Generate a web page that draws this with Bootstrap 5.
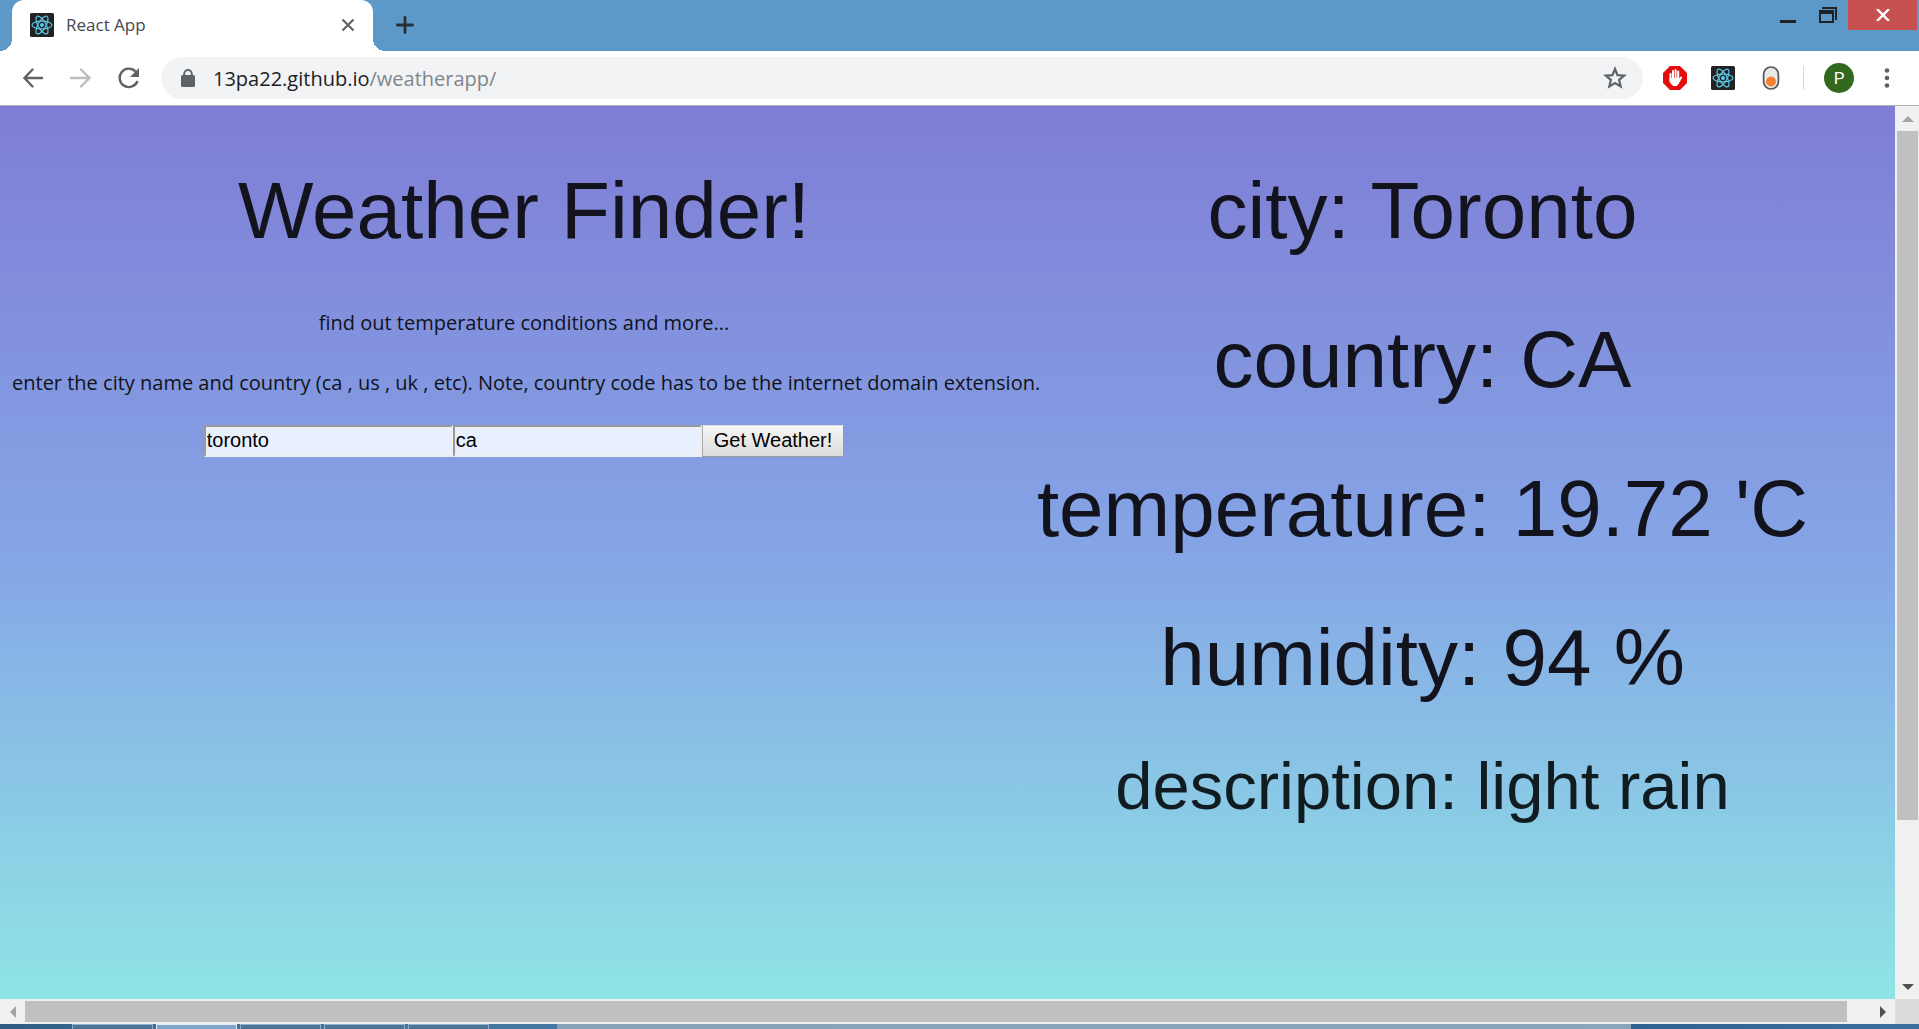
<!DOCTYPE html>
<html lang="en">
<head>
<meta charset="utf-8">
<meta name="viewport" content="width=device-width, initial-scale=1">
<title>React App</title>
<link rel="stylesheet" href="https://cdn.jsdelivr.net/npm/bootstrap@5.3.0/dist/css/bootstrap.min.css">
<style>
  body { font-family: "Open Sans", "Noto Sans", sans-serif; background: #fff; color: #111318; overflow: hidden; }
  button { border: 0; background: none; padding: 0; color: inherit; }
  svg { display: block; flex: none; }
  .tabstrip { height: 51px; background: #5d99c8; padding-left: 12px; }
  .browser-tab { width: 361px; background: #fff; border-radius: 12px 12px 0 0; padding: 0 16px 2px 18px; position: relative; font-size: 17px; color: #45484c; }
  .browser-tab::before, .browser-tab::after { content: ""; position: absolute; bottom: 0; width: 12px; height: 12px; }
  .browser-tab::before { left: -12px; background: radial-gradient(circle at 0 0, #5d99c8 12px, #fff 12px); }
  .browser-tab::after { right: -12px; background: radial-gradient(circle at 100% 0, #5d99c8 12px, #fff 12px); }
  .new-tab { margin-left: 23px; padding-bottom: 2px; }
  .win-btn { width: 40px; height: 30px; }
  .win-close { width: 69px; height: 30px; background: #c75050; margin-right: 2px; }
  .toolbar { height: 55px; padding: 0 23px 0 21px; border-bottom: 1px solid #b0b0b4; gap: 20px; color: #5f6368; }
  .toolbar .vr { height: 24px; align-self: center; }
  .omnibox { height: 42px; border-radius: 21px; background: #f1f3f4; padding: 0 16px 0 20px; gap: 18px; }
  .address { font-size: 20px; line-height: 28px; padding-top: 2px; color: #80868b; }
  .address b { font-weight: 400; color: #202124; }
  .avatar-btn { width: 30px; height: 30px; border-radius: 50%; background: #33691e; color: #fff; font: 17px Roboto, sans-serif; }
  .viewport-area { min-width: 0; background: linear-gradient(#7f7dd5, #85a5e6 50%, #8fe5e5); padding: 0 86px 0 12px; }
  .finder { width: 1024px; flex: none; }
  .finder p { font-size: 20px; line-height: 30px; margin: 0 0 30px; white-space: nowrap; }
  .big-title, .reading, .summary { font-family: "Liberation Sans", sans-serif; font-weight: 400; margin: 0; color: #12131c; white-space: nowrap; }
  .big-title, .reading { font-size: 80px; line-height: 109px; margin-bottom: 40px; }
  .finder .big-title { margin-bottom: 43px; }
  .finder p:last-of-type { margin-bottom: 27px; }
  .summary { font-size: 67px; line-height: 68px; color: #111c20; }
  .finder, .results { padding-top: 50px; }
  .lookup input { width: 249px; height: 32px; border: 2px solid; border-color: #999 #eee #eee #999; background: #e8f0fe; padding: 0 1px 2px; font: 20px "Liberation Sans", sans-serif; color: #000; border-radius: 0; }
  .lookup button { height: 32px; padding: 0 11px 2px; border: 1px solid; border-color: #ddd #999 #999 #aaa; background: linear-gradient(#f6f6f6, #dcdcdc); font: 20px "Liberation Sans", sans-serif; color: #000; }
  .vbar { flex: none; width: 24px; background: #f0f0f0; padding: 0 1px 0 2px; }
  .vbar .thumb { flex: 690; background: #c0c0c0; }
  .vbar .rest { flex: 154; }
  .arrow-cell { width: 21px; height: 25px; }
  .hbar { height: 25px; background: #f0f0f0; }
  .hbar .arrow-cell { width: 25px; }
  .hbar .thumb { flex: 1822; margin: 2px 0; background: #c0c0c0; }
  .hbar .rest { flex: 23; }
  .corner { width: 24px; background: #dcdcdc; }
  .taskbar { height: 5px; padding-left: 72px; background: linear-gradient(90deg, #2f5b82, #3f7099 10%, #4478a2 29%, #4478a2 29%, #86a2b8 29%, #8aa5bb 85%, #2f628f 85%, #3c6f9c); }
  .task { width: 81px; border: 1px solid #8fb0cc; border-bottom: 0; background: #4b7497; margin-right: 3px; }
  .task-on { background: #7fa6ca; border-color: #e4edf5; }
</style>
<script src="https://cdn.jsdelivr.net/npm/bootstrap@5.3.0/dist/js/bootstrap.bundle.min.js"></script>
</head>
<body class="d-flex flex-column vh-100">
<svg width="0" height="0" class="position-absolute" aria-hidden="true">
  <symbol id="react" viewBox="0 0 24 24">
    <rect width="24" height="24" rx="1.5" fill="#222"/>
    <g fill="none" stroke="#5ccbea" stroke-width="1.2"><ellipse cx="12" cy="12" rx="10" ry="3.9"/><ellipse cx="12" cy="12" rx="10" ry="3.9" transform="rotate(60 12 12)"/><ellipse cx="12" cy="12" rx="10" ry="3.9" transform="rotate(120 12 12)"/></g>
    <circle cx="12" cy="12" r="2" fill="#5ccbea"/>
  </symbol>
</svg>

<header>
  <div class="tabstrip d-flex">
    <div class="browser-tab d-flex align-items-center">
      <svg width="24" height="24"><use href="#react"/></svg>
      <span class="flex-grow-1 ms-2 ps-1">React App</span>
      <button type="button" aria-label="Close tab"><svg width="18" height="18" viewBox="0 0 18 18" stroke="#5f6368" stroke-width="2.2"><path d="M3.5 3.5l11 11M14.500 3.500l-11 11"/></svg></button>
    </div>
    <button type="button" class="new-tab" aria-label="New tab"><svg width="18" height="18" viewBox="0 0 18 18" stroke="#2b2e31" stroke-width="2.8" stroke-linecap="round"><path d="M9 1.500v15M1.500 9h15"/></svg></button>
    <div class="ms-auto d-flex align-items-start">
      <button type="button" class="win-btn d-flex align-items-center justify-content-center" aria-label="Minimize"><svg width="16" height="18"><path d="M0 14h16v3H0z" fill="#222"/></svg></button>
      <button type="button" class="win-btn d-flex align-items-center justify-content-center" aria-label="Restore"><svg width="18" height="16" fill="#222"><path d="M3 0h15v13h-2V2H3z"/><path fill-rule="evenodd" d="M0 3h15v13H0zM2 7v7h11V7z"/></svg></button>
      <button type="button" class="win-close d-flex align-items-center justify-content-center" aria-label="Close"><svg width="14" height="12" viewBox="0 0 14 12" stroke="#fff" stroke-width="2.400"><path d="M1 0l12 12M13 0L1 12"/></svg></button>
    </div>
  </div>
  <div class="toolbar d-flex align-items-center">
    <button type="button" aria-label="Back"><svg width="24" height="24" viewBox="1 1 24 24" fill="none" stroke="#5f6368" stroke-width="2.400" stroke-linecap="round"><path d="M22 13H4.500M12.500 4.500L4.500 13l8 8.500"/></svg></button>
    <button type="button" class="ms-1" aria-label="Forward"><svg width="24" height="24" viewBox="1 1 24 24" fill="none" stroke="#bcbec1" stroke-width="2.400" stroke-linecap="round"><path d="M3 13h18M13 4.500l8.500 8.500-8.500 8.500"/></svg></button>
    <button type="button" class="ms-1" aria-label="Reload"><svg width="24" height="24" viewBox="0 0 24 24" fill="none" stroke="#5f6368" stroke-width="2.400"><path d="M20.500 15A9.200 9.200 0 1 1 18.600 5.600"/><path d="M22 2v9h-9z" fill="#5f6368" stroke="none"/></svg></button>
    <div class="omnibox flex-grow-1 d-flex align-items-center">
      <svg width="14" height="18" viewBox="0 0 14 18" aria-hidden="true"><rect y="6" width="14" height="12" rx="1.500" fill="#5f6368"/><path d="M3.200 7V4.800a3.800 3.800 0 0 1 7.600 0V7" fill="none" stroke="#5f6368" stroke-width="1.900"/></svg>
      <div class="address flex-grow-1"><b>13pa22.github.io</b>/weatherapp/</div>
      <button type="button" aria-label="Bookmark"><svg width="24" height="24" viewBox="0 0 24 24" fill="none" stroke="#5f6368" stroke-width="2.200"><path d="M12 3l2.500 6.200 6.700.5-5.100 4.300 1.600 6.500L12 17l-5.700 3.500 1.600-6.500-5.100-4.300 6.700-.5z"/></svg></button>
    </div>
    <button type="button" class="me-1" aria-label="Ad blocker"><svg width="24" height="24" viewBox="0 0 24 24"><path d="M7 0h10l7 7v10l-7 7H7l-7-7V7z" fill="#e40d0d"/><g stroke="#fff" stroke-width="2" stroke-linecap="round" fill="#fff"><path d="M7.500 8v7M10 5v8M12.600 4v9M15.200 5.500V15M18 11.500l-3 5.500"/><path d="M7.200 12.500h8.300v4.500l-1.500 2.500h-4L7.800 17z" stroke-width="1"/></g></svg></button>
    <button type="button" class="me-1" aria-label="React Developer Tools"><svg width="24" height="24"><use href="#react"/></svg></button>
    <button type="button" aria-label="Toggle extension"><svg width="24" height="24" viewBox="0 0 24 24"><rect x="4.600" y="1" width="14.800" height="22" rx="7.400" fill="#e8eaea" stroke="#555" stroke-width="1.700"/><circle cx="12" cy="15.500" r="5" fill="#f58233"/></svg></button>
    <span class="vr"></span>
    <button type="button" class="avatar-btn" aria-label="Profile">P</button>
    <button type="button" class="ms-1" aria-label="Menu"><svg width="18" height="22" viewBox="0 0 18 22" fill="#5f6368"><circle cx="9" cy="3.500" r="2.300"/><circle cx="9" cy="11" r="2.300"/><circle cx="9" cy="18.500" r="2.300"/></svg></button>
  </div>
</header>

<div class="d-flex flex-grow-1">
  <main class="viewport-area flex-grow-1 d-flex">
    <section class="finder text-center">
      <h1 class="big-title">Weather Finder!</h1>
      <p>find out temperature conditions and more...</p>
      <p>enter the city name and country (ca , us , uk , etc). Note, country code has to be the internet domain extension.</p>
      <form class="lookup d-flex justify-content-center" onsubmit="return false">
        <input type="text" name="city" value="toronto" aria-label="City">
        <input type="text" name="country" value="ca" aria-label="Country">
        <button type="submit">Get Weather!</button>
      </form>
    </section>
    <section class="results flex-grow-1 text-center">
      <h2 class="reading">city: Toronto</h2>
      <h2 class="reading">country: CA</h2>
      <h2 class="reading">temperature: 19.72 'C</h2>
      <h2 class="reading">humidity: 94 %</h2>
      <h3 class="summary">description: light rain</h3>
    </section>
  </main>
  <div class="vbar d-flex flex-column" aria-hidden="true">
    <div class="arrow-cell d-flex align-items-center justify-content-center"><svg width="12" height="6"><path d="M0 6l6-6 6 6z" fill="#a3a3a3"/></svg></div>
    <div class="thumb"></div><div class="rest"></div>
    <div class="arrow-cell d-flex align-items-center justify-content-center"><svg width="12" height="6"><path d="M0 0l6 6 6-6z" fill="#505050"/></svg></div>
  </div>
</div>
<div class="hbar d-flex" aria-hidden="true">
  <div class="arrow-cell d-flex align-items-center justify-content-center"><svg width="6" height="12"><path d="M6 0L0 6l6 6z" fill="#a3a3a3"/></svg></div>
  <div class="thumb"></div><div class="rest"></div>
  <div class="arrow-cell d-flex align-items-center justify-content-center"><svg width="6" height="12"><path d="M0 0l6 6-6 6z" fill="#505050"/></svg></div>
  <div class="corner"></div>
</div>
<footer class="taskbar d-flex" aria-hidden="true">
  <div class="task"></div><div class="task task-on"></div><div class="task"></div><div class="task"></div><div class="task"></div>
</footer>
</body>
</html>
